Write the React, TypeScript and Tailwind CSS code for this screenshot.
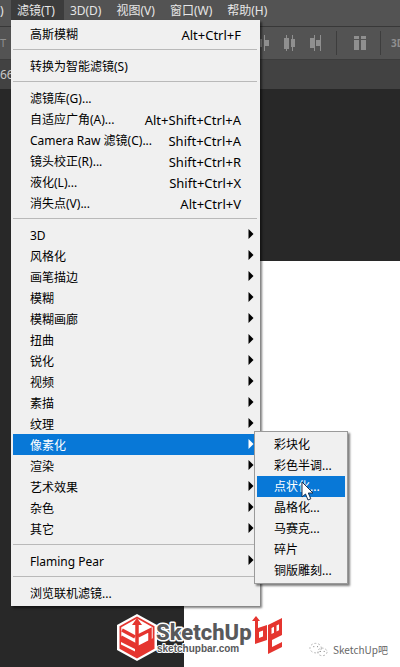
import React, { useState } from 'react';

type Item = {
  label: string;
  shortcut?: string;
  submenu?: string[];
};

const menus = ['滤镜(T)', '3D(D)', '视图(V)', '窗口(W)', '帮助(H)'];

const pixelate = ['彩块化', '彩色半调...', '点状化...', '晶格化...', '马赛克...', '碎片', '铜版雕刻...'];

const groups: Item[][] = [
  [{ label: '高斯模糊', shortcut: 'Alt+Ctrl+F' }],
  [{ label: '转换为智能滤镜(S)' }],
  [
    { label: '滤镜库(G)...' },
    { label: '自适应广角(A)...', shortcut: 'Alt+Shift+Ctrl+A' },
    { label: 'Camera Raw 滤镜(C)...', shortcut: 'Shift+Ctrl+A' },
    { label: '镜头校正(R)...', shortcut: 'Shift+Ctrl+R' },
    { label: '液化(L)...', shortcut: 'Shift+Ctrl+X' },
    { label: '消失点(V)...', shortcut: 'Alt+Ctrl+V' },
  ],
  [
    { label: '3D', submenu: [] },
    { label: '风格化', submenu: [] },
    { label: '画笔描边', submenu: [] },
    { label: '模糊', submenu: [] },
    { label: '模糊画廊', submenu: [] },
    { label: '扭曲', submenu: [] },
    { label: '锐化', submenu: [] },
    { label: '视频', submenu: [] },
    { label: '素描', submenu: [] },
    { label: '纹理', submenu: [] },
    { label: '像素化', submenu: pixelate },
    { label: '渲染', submenu: [] },
    { label: '艺术效果', submenu: [] },
    { label: '杂色', submenu: [] },
    { label: '其它', submenu: [] },
  ],
  [{ label: 'Flaming Pear', submenu: [] }],
  [{ label: '浏览联机滤镜...' }],
];

const Cursor: React.FC = () => (
  <svg className="pointer-events-none absolute left-[46px] top-[49px] h-[20px] w-[13px]" viewBox="0 0 13 20">
    <path
      d="M1 1v15l3.500-3 2.500 6 2.800-1.200-2.500-5.800h4.700z"
      fill="#fff"
      stroke="#1b3350"
      strokeWidth="1"
      strokeLinejoin="round"
    />
  </svg>
);

const SubMenu: React.FC<{ items: string[] }> = ({ items }) => {
  const [active, setActive] = useState('点状化...');

  return (
    <div className="absolute -top-[3px] left-[241px] z-10 w-[94px] border border-[#9a9a9a] bg-[#f0f0f0] px-[2px] py-[2px] shadow-[2px_2px_2px_rgba(0,0,0,0.5)]">
      {items.map((item) => (
        <button
          key={item}
          type="button"
          onMouseEnter={() => setActive(item)}
          className={`flex h-[21px] w-full items-center whitespace-nowrap pl-[17px] pt-px text-left ${
            item === active ? 'bg-[#0878d7] text-white' : 'text-black'
          }`}
        >
          {item}
        </button>
      ))}
      <Cursor />
    </div>
  );
};

const MenuRow: React.FC<{ item: Item; open: boolean; onOpen: () => void }> = ({ item, open, onOpen }) => (
  <div className="relative">
    <button
      type="button"
      onClick={onOpen}
      className={`flex h-[21px] w-full items-center justify-between whitespace-nowrap pl-[17px] pt-[2px] ${
        item.submenu ? 'pr-[3px]' : 'pr-[16px]'
      } ${open ? 'bg-[#0878d7] text-white' : 'text-black'}`}
    >
      <span>{item.label}</span>
      {item.shortcut && <span className="text-[13px]">{item.shortcut}</span>}
      {item.submenu && (
        <svg className="mb-[4px] h-[10px] w-[6px]" viewBox="0 0 6 10">
          <path d="M0.5 0v10L5.5 5z" fill="currentColor" />
        </svg>
      )}
    </button>
    {open && item.submenu && item.submenu.length > 0 && <SubMenu items={item.submenu} />}
  </div>
);

const FilterMenu: React.FC = () => {
  const [open, setOpen] = useState('像素化');

  return (
    <div className="absolute left-0 top-full z-10 w-[249px] bg-[#f0f0f0] py-[3px] pl-[2px] pr-[3px] shadow-[2px_2px_2px_rgba(0,0,0,0.5)]">
      {groups.map((group, i) => (
        <React.Fragment key={i}>
          {i > 0 && <hr className="my-[5px] border-t border-[#b9b9b9]" />}
          {group.map((item) => (
            <MenuRow
              key={item.label}
              item={item}
              open={item.label === open}
              onOpen={() => setOpen(item.label)}
            />
          ))}
        </React.Fragment>
      ))}
    </div>
  );
};

const OptionsBar: React.FC = () => (
  <div className="flex h-[34px] items-center justify-between border-b border-t border-b-[#3c3c3c] border-t-[#383838] bg-[#535353] text-[#8f8f8f]">
    <span className="text-[11px]">T</span>
    <div className="flex h-full items-center">
      <svg className="h-[16px] w-[66px]" viewBox="0 0 66 16" fill="currentColor">
        <path d="M0 4h4v8H0zM6 0h1v16H6zM7 5h4v6H7zM26 3h5v11h-5zM28 0h1v16h-1zM33 4h4v8h-4zM34 0h1v16h-1zM52 3h5v10h-5zM56 0h1v16h-1zM58 5h4v6h-4zM62 0h1v16h-1z" />
      </svg>
      <span className="ml-[12px] mr-[17px] h-[24px] w-px bg-[#3d3d3d]" />
      <svg className="h-[14px] w-[12px]" viewBox="0 0 12 14" fill="currentColor">
        <path d="M0 0h5v3H0zM0 4h5v10H0zM7 0h5v3H7zM7 4h5v10H7z" />
      </svg>
      <span className="ml-[14px] mr-[10px] h-[24px] w-px bg-[#3d3d3d]" />
      <span className="w-[9px] overflow-hidden text-[10px] font-bold">3D</span>
    </div>
  </div>
);

const SketchUpLogo: React.FC = () => (
  <svg
    className="absolute bottom-[4px] left-1/2 h-[50px] w-[170px] -translate-x-1/2"
    viewBox="115 613 170 50"
    role="img"
    aria-label="SketchUp吧 sketchupbar.com"
  >
    <path d="M137 614l20 11v25l-20 11-20-11v-25z" fill="#fff" />
    <path d="M137 616.500l17.500 9.700v22.600l-17.500 9.700-17.500-9.700v-22.600z" fill="#e5352f" />
    <path d="M137 618.500l15.700 8.700v11l-15.700 8-15.700-8v-11z" fill="#fff" />
    <g fill="none" stroke="#e5352f" strokeWidth="3.500">
      <path d="M137 652v-29" />
      <path d="M122 630l13 7M121 637l15 8" />
      <path d="M138 636l12-6v12l-11 6" />
    </g>
    <path d="M137 618l5 7h-10z" fill="#e5352f" />
    <path d="M121 642l14 7v2.500l-14-7z" fill="#fff" />
    <g fill="#58595b" stroke="#fff" strokeLinejoin="round" paintOrder="stroke" fontFamily="'Roboto', sans-serif">
      <text x="156" y="640" fontSize="22" fontWeight="800" strokeWidth="3">
        SketchUp
      </text>
      <text x="157" y="652" fontSize="10" fontWeight="700" strokeWidth="2" fontFamily="'Liberation Sans', sans-serif">
        sketchupbar.com
      </text>
    </g>
    <g fill="#e5352f" stroke="#fff" strokeWidth="1" paintOrder="stroke" fillRule="evenodd">
      <path d="M256 616l4 5h-2v7l9-3v15l-12 4v-23h-3zM259 632v6l4-1.500v-6z" />
      <path d="M268 625l14-7v17l-10 5v7l10-5v5l-14 7zM271.500 628v6l2.500-1.200v-6zM276.500 625.500v6l2.500-1.200v-6z" />
    </g>
  </svg>
);

const App: React.FC = () => (
  <div className="relative flex min-h-screen flex-col overflow-hidden bg-[#282828] font-['Noto_Sans','Noto_Sans_CJK_SC',sans-serif] text-[12px] leading-[20px]">
    <nav className="flex h-[26px] bg-[#535353] text-[#e6e6e6]">
      <span className="w-[11px] pt-px">)</span>
      {menus.map((menu, i) => (
        <div key={menu} className="relative h-[20px]">
          <button
            type="button"
            className={`h-full whitespace-nowrap pl-[6px] pr-[9px] pt-px ${i === 0 ? 'bg-[#3c3c3c]' : ''}`}
          >
            {menu}
          </button>
          {i === 0 && <FilterMenu />}
        </div>
      ))}
    </nav>
    <OptionsBar />
    <div className="h-[29px] bg-[#424242] pt-[5px] text-[#c8c8c8]">66</div>
    <main className="flex flex-1 pt-[172px]">
      <div className="ml-[46%] flex flex-1 items-end justify-end bg-white pb-[7px] pr-[12px]">
        <div className="flex items-center gap-[5px] text-[#666666]">
          <svg className="h-[16px] w-[19px]" viewBox="0 0 20 16" fill="none" stroke="#b0b0b0" strokeDasharray="2 2">
            <ellipse cx="7" cy="6" rx="6" ry="5" />
            <ellipse cx="14" cy="10" rx="5" ry="4" />
            <path d="M5 4v1M9 4v1M12 9v1M16 9v1" stroke="#777777" />
          </svg>
          <span className="font-['Noto_Sans_CJK_SC',sans-serif] text-[10px]">SketchUp吧</span>
        </div>
      </div>
    </main>
    <SketchUpLogo />
  </div>
);

export default App;
